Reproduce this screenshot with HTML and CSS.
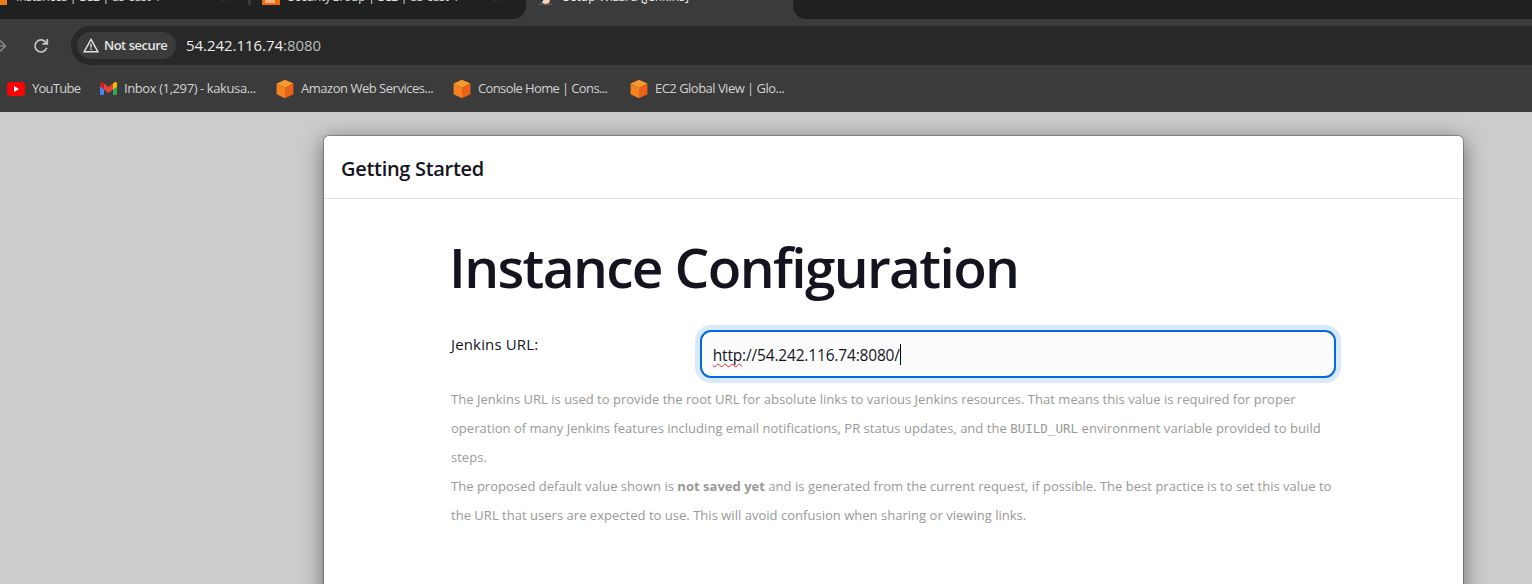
FILE: index.html
```html
<!DOCTYPE html>
<html lang="en">
<head>
<meta charset="utf-8">
<title>Setup Wizard [Jenkins]</title>
<link rel="stylesheet" href="styles.css">
</head>
<body>
<svg class="defs" width="0" height="0" aria-hidden="true">
  <symbol id="cube" viewBox="0 0 18 20">
    <path d="M9 .8 17.4 4.6 9 9 .6 4.6Z" fill="#fb9a2c"/>
    <path d="M.6 4.6 9 9v10.2L.6 15.2Z" fill="#f58220"/>
    <path d="M17.4 4.6 9 9v10.2l8.4-4Z" fill="#ea6217"/>
  </symbol>
</svg>
<header class="browser">
  <div class="tabs">
    <div class="tab-group left">
      <div class="tab first"><span class="fav aws"></span><span class="t t1">Instances | EC2 | us-east-1</span><span class="x">×</span></div>
      <span class="sep"></span>
      <div class="tab second"><span class="fav ec2"></span><span class="t t2">SecurityGroup | EC2 | us-east-1</span><span class="x">×</span></div>
    </div>
    <div class="tab active">
      <svg class="jenkins" width="18" height="6" viewBox="0 0 18 6"><path d="M1 4.500 5 2.400 9 5H1Z" fill="#335f81"/><path d="M4 0h9l-1 3-3 1.500-4-2Z" fill="#f0d6b7"/><path d="M8 4.500l3-1.500 2 2H8Z" fill="#d33833"/><path d="M12.500 3l3.500 1v1h-3.500Z" fill="#335f81"/><path d="M4 0h2v1.500H4Z" fill="#2b2020"/></svg>
      <span class="t t3">Setup Wizard [Jenkins]</span><span class="x">×</span>
    </div>
    <div class="tab-group right"><span class="plus">+</span></div>
  </div>
  <div class="toolbar">
    <svg class="forward" width="8" height="16" viewBox="0 0 8 16"><path d="M0 8h5.5M0 2.5 5.5 8 0 13.5" fill="none" stroke="#858585" stroke-width="1.7"/></svg>
    <svg class="reload" width="16" height="16" viewBox="0 0 16 16"><path d="M13.7 9.800A6 6 0 1 1 12.400 3.900L14 5.600" fill="none" stroke="#c7c7c7" stroke-width="1.700"/><path d="M14.300 1v4.900H9.400" fill="none" stroke="#c7c7c7" stroke-width="1.700"/></svg>
    <div class="address">
      <div class="chip">
        <svg width="16" height="15" viewBox="0 0 16 15"><path d="M8 1.4 15 13.8H1Z" fill="none" stroke="#e3e3e3" stroke-width="1.4"/><path d="M8 5.8v3.7M8 10.6v1.5" stroke="#e3e3e3" stroke-width="1.4"/></svg>
        <span class="chip-text">Not secure</span>
      </div>
      <span class="url">54.242.116.74<span class="port">:8080</span></span>
    </div>
  </div>
  <nav class="bookmarks">
    <a class="bm b1"><svg width="18" height="14" viewBox="0 0 18 14"><rect width="18" height="14" rx="3.5" fill="#f00"/><path d="M7 4v6l5-3Z" fill="#fff"/></svg><span>YouTube</span></a>
    <a class="bm b2"><svg width="17" height="13" viewBox="0 0 17 13"><path d="M0 3h4v10H1.2Q0 13 0 11.8Z" fill="#4285f4"/><path d="M13 3h4v8.800Q17 13 15.800 13H13Z" fill="#34a853"/><path d="M13 1.500Q17-1.500 17 2V4.600L13 7.600Z" fill="#fbbc04"/><path d="M0 2Q0-1.500 4 1.500V7.600L0 4.600Z" fill="#c5221f"/><path d="M4 1.500 8.500 5 13 1.500V7.500L8.500 11 4 7.500Z" fill="#ea4335"/></svg><span>Inbox (1,297) - kakusa...</span></a>
    <a class="bm b3"><svg width="18" height="20"><use href="#cube"/></svg><span>Amazon Web Services...</span></a>
    <a class="bm b4"><svg width="18" height="20"><use href="#cube"/></svg><span>Console Home | Cons...</span></a>
    <a class="bm b5"><svg width="18" height="20"><use href="#cube"/></svg><span>EC2 Global View | Glo...</span></a>
  </nav>
</header>
<main class="page">
  <section class="dialog">
    <div class="dialog-header"><span class="dialog-title">Getting Started</span></div>
    <div class="dialog-body">
      <h1><span>Instance Configuration</span></h1>
      <div class="field">
        <label><span class="label">Jenkins URL:</span></label>
        <div class="input"><span class="value"><span class="misspelt">http</span>://54.242.116.74:8080/</span><span class="caret"></span></div>
      </div>
      <div class="help">
        <div><span class="l1">The Jenkins URL is used to provide the root URL for absolute links to various Jenkins resources. That means this value is required for proper</span></div>
        <div><span class="l2">operation of many Jenkins features including email notifications, PR status updates, and the </span><code>BUILD_URL</code><span class="l2b"> environment variable provided to build</span></div>
        <div><span class="l3">steps.</span></div>
        <div><span class="l4">The proposed default value shown is </span><b>not saved yet</b><span class="l4b"> and is generated from the current request, if possible. The best practice is to set this value to</span></div>
        <div><span class="l5">the URL that users are expected to use. This will avoid confusion when sharing or viewing links.</span></div>
      </div>
    </div>
  </section>
</main>
</body>
</html>
```

FILE: styles.css
```css
* { box-sizing: border-box; }
body { margin: 0; width: 1532px; height: 584px; overflow: hidden; background: #ccc; font-family: "Open Sans", "Noto Sans", sans-serif; display: flex; flex-direction: column; }
.defs { position: absolute; }
svg { display: block; flex: none; }
.browser { height: 112px; background: #3b3b3b; flex: none; }
.tabs { height: 19px; display: flex; overflow: hidden; }
.tab-group { background: #1f2120; display: flex; height: 19px; }
.left { width: 526px; border-bottom-right-radius: 13px; }
.right { flex: 1; border-bottom-left-radius: 13px; padding-left: 17px; }
.tab { display: flex; height: 19px; font-size: 12px; color: #dedede; white-space: nowrap; }
.t, .x, .plus { line-height: 16px; margin-top: -11px; flex: none; }
.first { width: 248px; }
.second { width: 275px; padding-left: 11px; }
.active { width: 267px; padding-left: 11px; color: #eee; }
.fav { height: 5px; background: #ee7c12; flex: none; }
.aws { width: 7px; margin-right: 9px; }
.ec2 { width: 18px; margin-right: 8px; border: solid #ee6b10; border-width: 0 5px 2px 3px; background: #f6b37c; }
.jenkins { margin-right: 8px; }
.t { width: 205px; }
.t1, .t2 { letter-spacing: -.22px; }
.t3 { letter-spacing: .05px; }
.x { font-size: 17px; color: #666; }
.sep { width: 3px; height: 5px; background: #3b3b3b; }
.plus { font-size: 18px; color: #ddd; margin-top: -13px; }
.toolbar { height: 46px; padding-top: 7px; display: flex; align-items: center; }
.reload { margin-left: 25px; }
.address { height: 39px; flex: 1; margin-left: 22px; background: #282828; border-radius: 20px 0 0 20px; display: flex; align-items: center; padding-left: 6px; }
.chip { width: 99px; height: 27px; border-radius: 14px; background: #3b3b3b; display: flex; align-items: center; padding-left: 6px; gap: 5px; }
.chip-text { font-size: 13px; font-weight: 600; color: #e6e6e6; white-space: nowrap; letter-spacing: -.5px; margin-top: -2px; }
.url { margin-left: 10px; margin-top: -2px; font-size: 15px; color: #ededed; letter-spacing: -.04px; }
.port { color: #bdbdbd; }
.bookmarks { height: 47px; display: flex; align-items: center; padding-left: 7px; }
.bm { display: flex; align-items: center; font-size: 13px; color: #d2d2d2; white-space: nowrap; gap: 7px; }
.bm span { letter-spacing: -.4px; margin-top: -2px; }
.b1 { width: 93px; }
.b2 { width: 176px; }
.b3, .b4, .b5 { width: 177px; }
.b1 span { letter-spacing: -.75px; }
.b3 span { letter-spacing: -.48px; }
.b4 span { letter-spacing: -.62px; }
.b5 span { letter-spacing: -.52px; }
.page { flex: 1; padding: 24px 69px 0 324px; overflow: hidden; }
.dialog { width: 1139px; height: 600px; background: #fff; border-radius: 5px; box-shadow: 0 0 0 1px rgba(0,0,0,.25), 0 4px 22px rgba(0,0,0,.5); }
.dialog-header { height: 63px; border-bottom: 1px solid #e2e2e2; padding: 0 17px; display: flex; align-items: center; }
.dialog-title { font-size: 20px; font-weight: 600; color: #14141f; letter-spacing: -.3px; padding-top: 3px; }
.dialog-body { padding: 30px 127px 0; white-space: nowrap; }
h1 { margin: 0 0 0 -2px; font-size: 55px; font-weight: 600; line-height: 75px; color: #14141f; letter-spacing: -1.65px; }
.field { display: flex; margin-top: 26px; height: 49px; }
label { width: 249px; font-size: 15px; line-height: 28px; color: #14141f; letter-spacing: .15px; }
.input { width: 637px; height: 48px; border: 2px solid #006ae3; border-radius: 11px; background: #fcfcfc; box-shadow: 0 0 0 5px #d9e9fa; display: flex; align-items: center; padding-left: 11px; font-size: 15.5px; color: #14141f; }
.value { padding-top: 2px; letter-spacing: -.17px; }
.misspelt { text-decoration: underline wavy #e22 1px; text-underline-offset: 2px; text-decoration-skip-ink: none; }
.caret { width: 1px; height: 21px; background: #000; }
.help { margin-top: 6px; font-size: 13px; line-height: 29px; color: #999; letter-spacing: .022px; }
.help div { height: 29px; }
.help span { white-space: pre; }
.l2b { letter-spacing: .07px; }
code { font-family: "DejaVu Sans Mono", monospace; font-size: 12.5px; }
```
